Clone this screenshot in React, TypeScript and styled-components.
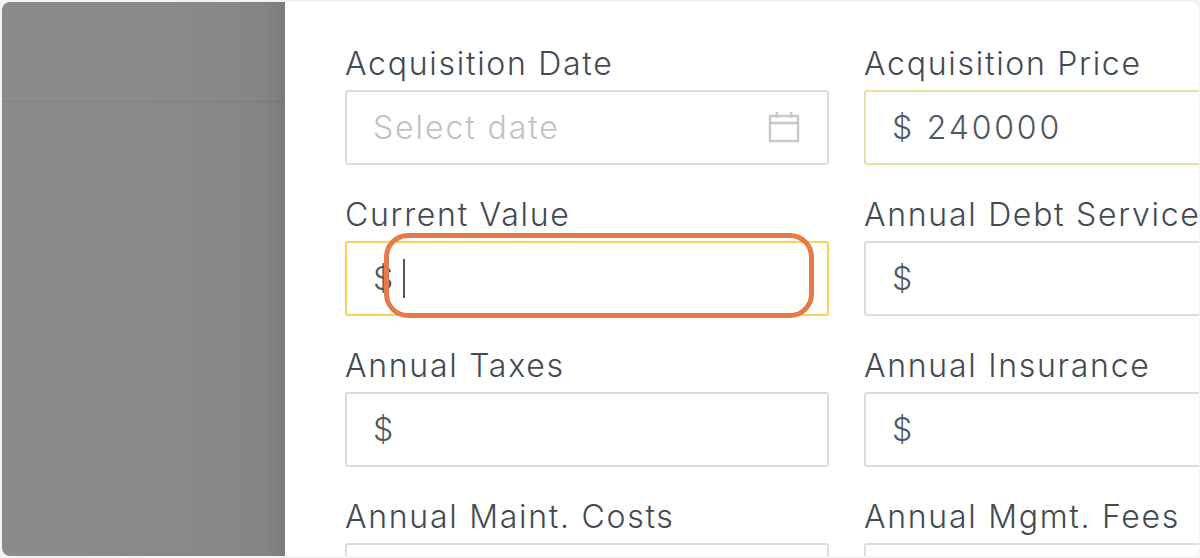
import React from "react";
import styled, { createGlobalStyle } from "styled-components";

const Global = createGlobalStyle`
  html, body { margin: 0; padding: 0; background: #f3f3f9; }
  body { width: 1200px; height: 558px; overflow: hidden; font-family: "Inter", "Liberation Sans", sans-serif; }
`;
const Frame = styled.div`
  position: relative;
  display: flex;
  box-sizing: border-box;
  width: 1197px;
  height: 554px;
  margin: 2px 0 0 2px;
  border-radius: 8px;
  overflow: hidden;
  background: #fff;
`;
const Backdrop = styled.div`
  flex: 0 0 283px;
  background: linear-gradient(90deg, #8b8b8b 0%, #8a8a8a 60%, #858585 92%, #7b7b7b 100%);
`;
const BackdropHeader = styled.div`
  height: 99px;
  border-bottom: 1px solid rgba(0, 0, 0, 0.08);
`;
const Panel = styled.div`
  flex: 1;
  min-width: 0;
  padding: 43px 0 0 60px;
  overflow: hidden;
`;
const Grid = styled.div`
  display: grid;
  grid-template-columns: 484px 484px;
  column-gap: 35px;
`;
const Field = styled.div`
  height: 151px;
`;
const Label = styled.div`
  height: 45px;
  font-size: 32px;
  line-height: 38px;
  letter-spacing: 1.72px;
  color: #434a54;
  white-space: nowrap;
  font-weight: 300;
`;
const Box = styled.div<{ $tone?: "pale" | "focus" }>`
  box-sizing: border-box;
  display: flex;
  align-items: center;
  height: 75px;
  padding: 0 26px 1px;
  border-radius: 3px;
  background: #fff;
  border: 2px solid ${(p) => (p.$tone === "pale" ? "#eadfa4" : p.$tone === "focus" ? "#f9d25e" : "#dcdcdc")};
  font-size: 32px;
  font-weight: 300;
  letter-spacing: 2.8px;
  color: #4f5862;
  white-space: pre;
`;
const Placeholder = styled.span`
  flex: 1;
  color: #c2c2c2;
  letter-spacing: 1.9px;
`;
const CalendarSlot = styled.span`
  display: flex;
  margin-right: 1px;
  margin-bottom: 1px;
`;
const Caret = styled.span`
  width: 1.5px;
  height: 39px;
  margin-left: 7px;
  margin-top: 1px;
  background: #555;
`;
const Highlight = styled.div`
  position: absolute;
  left: 382px;
  top: 231px;
  width: 430px;
  height: 85px;
  box-sizing: border-box;
  border: 5px solid #e57a4b;
  border-radius: 24px;
`;

const CalendarIcon = () => (
  <svg width="32" height="32" viewBox="0 0 32 32" fill="none" stroke="#c8c8c8" strokeWidth="2.4">
    <rect x="2" y="5" width="28" height="25" />
    <path d="M2 12H30M9 1V7M23 1V7" />
  </svg>
);

const fields: { label: string; value?: string; tone?: "pale" | "focus" }[] = [
  { label: "Current Value", value: "$", tone: "focus" },
  { label: "Annual Debt Service", value: "$" },
  { label: "Annual Taxes", value: "$" },
  { label: "Annual Insurance", value: "$" },
  { label: "Annual Maint. Costs" },
  { label: "Annual Mgmt. Fees" },
];

export default function App() {
  return (
    <>
      <Global />
      <Frame>
        <Backdrop>
          <BackdropHeader />
        </Backdrop>
        <Panel>
          <Grid>
            <Field>
              <Label>Acquisition Date</Label>
              <Box>
                <Placeholder>Select date</Placeholder>
                <CalendarSlot>
                  <CalendarIcon />
                </CalendarSlot>
              </Box>
            </Field>
            <Field>
              <Label>Acquisition Price</Label>
              <Box $tone="pale">$ 240000</Box>
            </Field>
            {fields.map((f) => (
              <Field key={f.label}>
                <Label>{f.label}</Label>
                <Box $tone={f.tone}>
                  {f.value}
                  {f.tone === "focus" && <Caret />}
                </Box>
              </Field>
            ))}
          </Grid>
        </Panel>
        <Highlight />
      </Frame>
    </>
  );
}
